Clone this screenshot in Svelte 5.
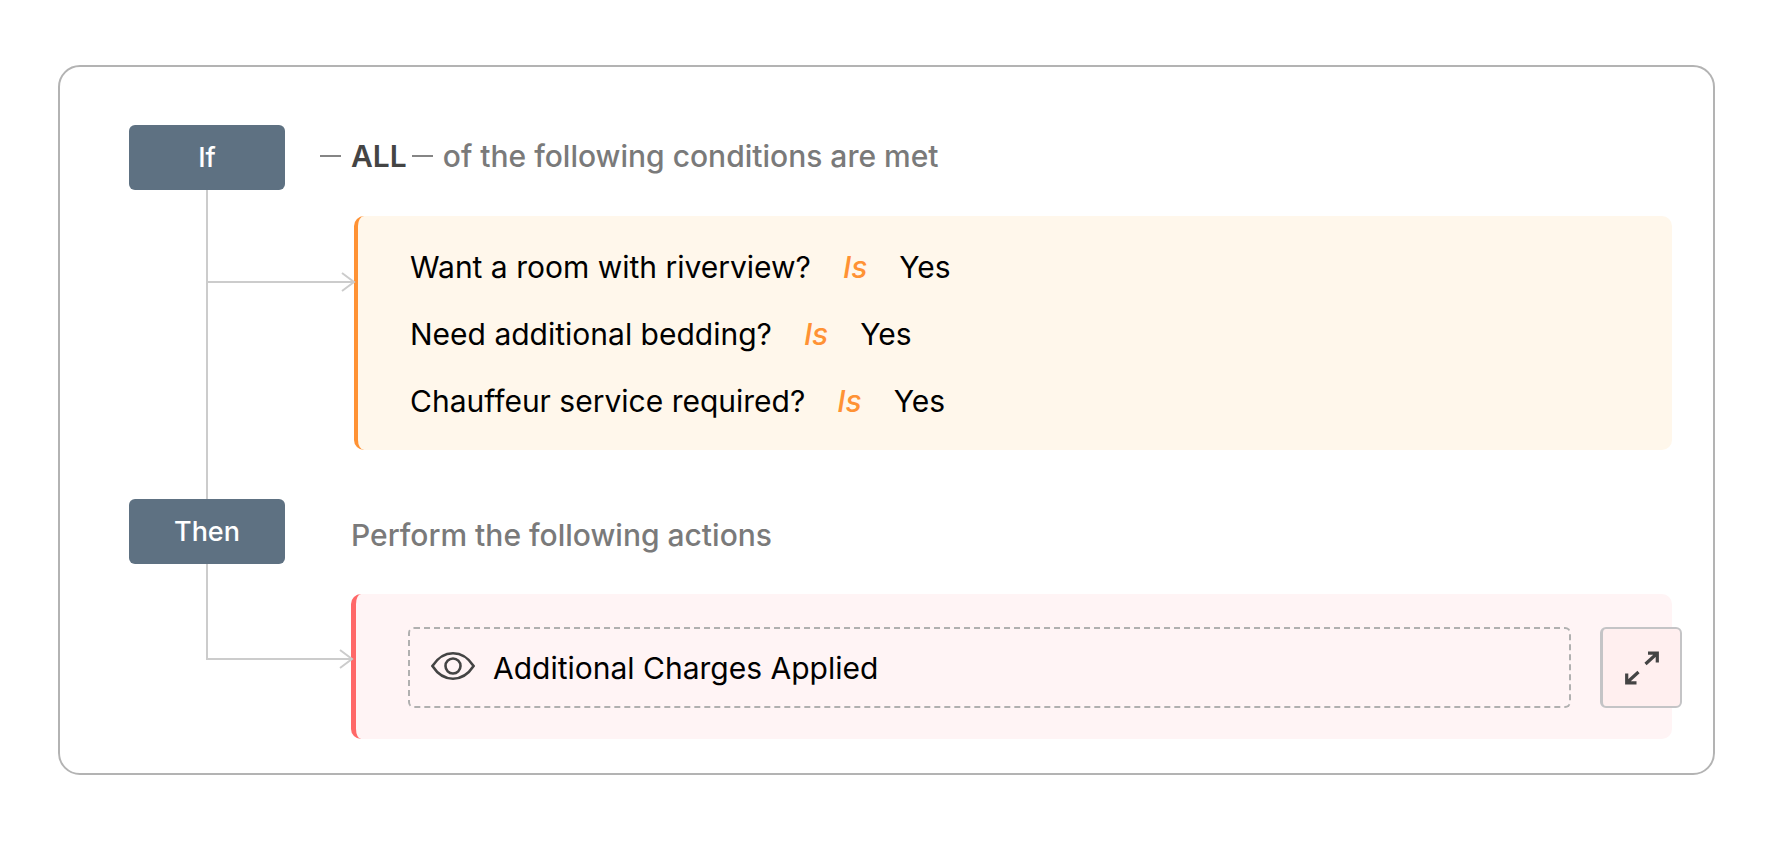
<script>
  const conditions = [
    { field: 'Want a room with riverview?', operator: 'Is', value: 'Yes' },
    { field: 'Need additional bedding?', operator: 'Is', value: 'Yes' },
    { field: 'Chauffeur service required?', operator: 'Is', value: 'Yes' }
  ];
  const actions = ['Additional Charges Applied'];
</script>

<main class="rule">
  <section>
    <header class="step">
      <span class="badge">If</span>
      <h2 class="match"><i class="dash"></i><strong>ALL</strong><i class="dash second"></i><span>of the following conditions are met</span></h2>
    </header>
    <div class="branch through">
      <svg class="elbow" width="146" height="104" viewBox="2 0 146 104" aria-hidden="true">
        <path d="M2 92H148" /><path d="M136 83L148 92L136 101" />
      </svg>
      <ul class="panel conditions">
        {#each conditions as c}
          <li><span>{c.field}</span><em>{c.operator}</em><span>{c.value}</span></li>
        {/each}
      </ul>
    </div>
  </section>

  <section>
    <header class="step">
      <span class="badge">Then</span>
      <h2 class="perform">Perform the following actions</h2>
    </header>
    <div class="branch">
      <svg class="elbow" width="145" height="107" viewBox="0 0 145 107" aria-hidden="true">
        <path d="M1 0V95H145" /><path d="M134 86L146 95L134 104" />
      </svg>
      <div class="panel actions">
        {#each actions as action}
          <div class="action">
            <svg width="44" height="28" viewBox="0 0 44 28" aria-hidden="true">
              <path d="M1.4 14C6.5 6.2 13.5 1.3 22 1.3S37.5 6.2 42.6 14C37.5 21.800 30.5 26.700 22 26.700S6.5 21.800 1.4 14Z" />
              <circle cx="22" cy="14" r="7.5" />
            </svg>
            <span>{action}</span>
          </div>
          <button type="button" aria-label="Expand">
            <svg width="36" height="34" viewBox="0 0 36 34" aria-hidden="true">
              <path d="M21.5 13L33 2.5M24 2.2H33.300V11.5" />
              <path d="M14.5 21L3 31.500M2.700 22.500V31.800H12.500" />
            </svg>
          </button>
        {/each}
      </div>
    </div>
  </section>
</main>

<style>
  :global(body) {
    margin: 0;
    background: #fff;
    font-family: Inter, "Liberation Sans", sans-serif;
  }
  .rule {
    margin: 65px 52px 65px 58px;
    padding: 58px 41px 34px 69px;
    border: 2px solid #b3b3b3;
    border-radius: 22px;
    font-size: 30px;
    color: #000;
  }
  .step {
    display: flex;
    align-items: center;
    height: 65px;
  }
  .badge {
    width: 156px;
    line-height: 65px;
    border-radius: 6px;
    background: #5e7182;
    color: #fff;
    font-size: 27px;
    font-weight: 500;
    text-align: center;
  }
  h2 {
    display: flex;
    align-items: center;
    margin: 0;
    font-size: 30px;
    line-height: 36px;
    font-weight: 500;
    color: #7a7a7a;
  }
  .match {
    padding: 0 0 4px 35px;
  }
  .perform {
    padding: 6px 0 0 66px;
  }
  strong {
    padding: 0 5px 0 10px;
    font-weight: 600;
    color: #444;
  }
  .dash {
    width: 21px;
    height: 2px;
    background: #858585;
  }
  .second {
    margin-right: 10px;
  }
  .branch {
    display: flex;
    align-items: flex-start;
    margin-left: 77px;
  }
  .through {
    padding-bottom: 49px;
    border-left: 2px solid #ccc;
  }
  .elbow {
    flex: none;
    position: relative;
    overflow: visible;
    fill: none;
    stroke: #ccc;
    stroke-width: 2;
  }
  .panel {
    flex: 1;
    box-sizing: border-box;
    margin: 0;
    border-radius: 10px;
  }
  .conditions {
    margin-top: 26px;
    padding: 18px 52px 15px;
    border-left: 4px solid #ff9234;
    background: #fff7eb;
    list-style: none;
  }
  li {
    display: flex;
    gap: 32px;
    line-height: 67px;
  }
  em {
    font-weight: 500;
    color: #ff9234;
  }
  .actions {
    display: flex;
    gap: 29px;
    margin-top: 30px;
    padding: 33px 0 31px 52px;
    border-left: 5px solid #ff6868;
    background: #fff4f5;
  }
  .action {
    flex: 1;
    display: flex;
    align-items: center;
    gap: 18px;
    box-sizing: border-box;
    height: 81px;
    padding-left: 21px;
    border: 2px dashed #b0b0b0;
    border-radius: 6px;
  }
  .action svg {
    margin-bottom: 4px;
    fill: none;
    stroke: #444;
    stroke-width: 2.6;
  }
  button {
    display: grid;
    place-items: center;
    flex: none;
    box-sizing: border-box;
    width: 82px;
    height: 81px;
    margin-right: -10px;
    padding: 0;
    border: 2px solid #c4c4c6;
    border-left-width: 3px;
    border-radius: 6px;
    background: #ffefef;
  }
  button svg {
    fill: none;
    stroke: #444;
    stroke-width: 3.2;
  }
</style>
